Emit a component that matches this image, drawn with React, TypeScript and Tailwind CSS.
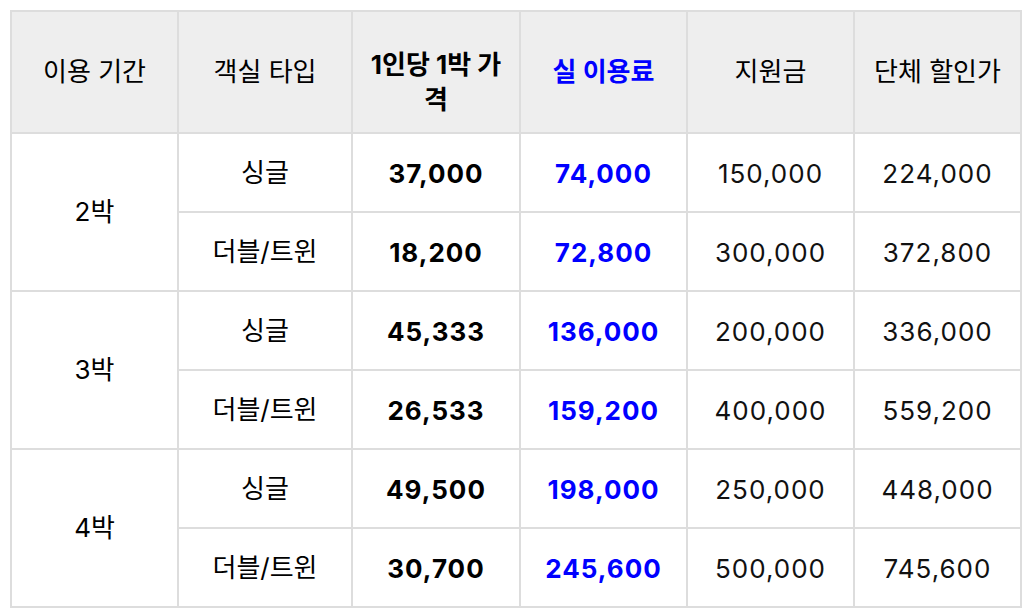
const rows = [
  { period: "2박", items: [
    ["싱글", "37,000", "74,000", "150,000", "224,000"],
    ["더블/트윈", "18,200", "72,800", "300,000", "372,800"],
  ] },
  { period: "3박", items: [
    ["싱글", "45,333", "136,000", "200,000", "336,000"],
    ["더블/트윈", "26,533", "159,200", "400,000", "559,200"],
  ] },
  { period: "4박", items: [
    ["싱글", "49,500", "198,000", "250,000", "448,000"],
    ["더블/트윈", "30,700", "245,600", "500,000", "745,600"],
  ] },
];

const cell = "border-2 border-[#dddddd] text-center align-middle px-3";
const num = "tracking-[1px] pt-[3px]";

export default function App() {
  return (
    <div className="p-[10px] bg-white text-black" style={{ fontFamily: 'Inter, "Noto Sans CJK KR", "Noto Sans", sans-serif' }}>
      <table className="w-[1010px] border-collapse table-fixed text-[26px] leading-[34px]">
        <colgroup>
          <col className="w-[167px]" />
          <col className="w-[174px]" />
          <col className="w-[168px]" />
          <col className="w-[167px]" />
          <col className="w-[167px]" />
          <col className="w-[167px]" />
        </colgroup>
        <thead>
          <tr className="h-[122px] bg-[#eeeeee]">
            <th className={`${cell} font-normal`}>이용 기간</th>
            <th className={`${cell} font-normal`}>객실 타입</th>
            <th className={`${cell} font-bold pt-[20px] leading-[35px]`}>1인당 1박 가<br />격</th>
            <th className={`${cell} font-bold text-[#0000ff]`}>실 이용료</th>
            <th className={`${cell} font-normal`}>지원금</th>
            <th className={`${cell} font-normal`}>단체 할인가</th>
          </tr>
        </thead>
        <tbody>
          {rows.map((g) =>
            g.items.map((r, i) => (
              <tr key={g.period + i} className="h-[79px]">
                {i === 0 && (
                  <td rowSpan={2} className={cell}>{g.period}</td>
                )}
                <td className={cell}>{r[0]}</td>
                <td className={`${cell} ${num} font-bold`}>{r[1]}</td>
                <td className={`${cell} ${num} font-bold text-[#0000ff]`}>{r[2]}</td>
                <td className={`${cell} ${num} text-[#111]`}>{r[3]}</td>
                <td className={`${cell} ${num} text-[#111]`}>{r[4]}</td>
              </tr>
            ))
          )}
        </tbody>
      </table>
    </div>
  );
}
